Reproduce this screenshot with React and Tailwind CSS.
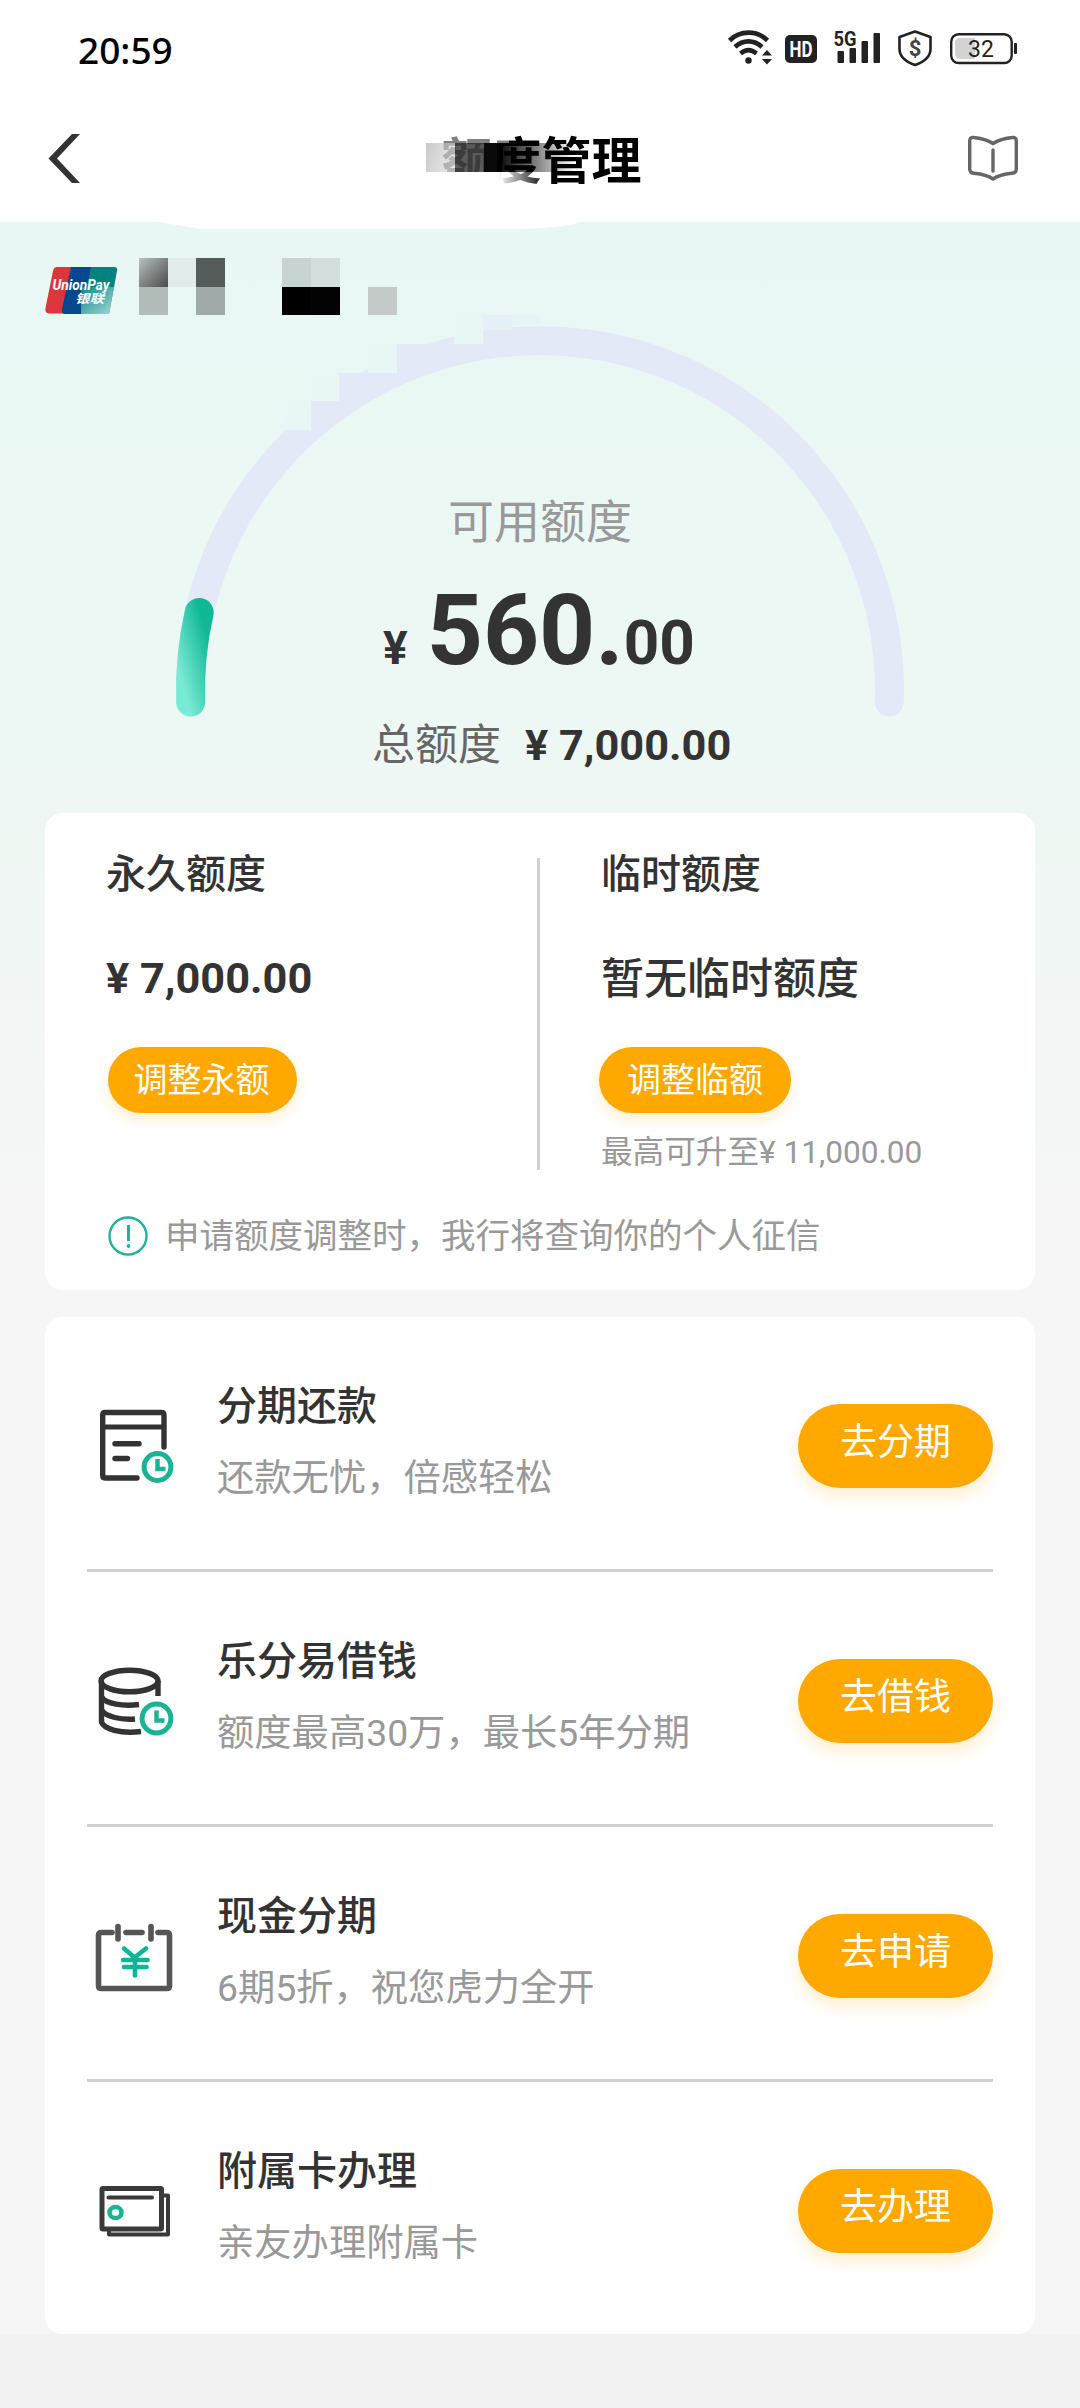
import React from 'react';

// each cell of the masked card number, null = nothing drawn
const maskCells = [
	'bg-gradient-to-br from-[#b9c3c1] to-[#4c4c4c]', 'bg-[#e0ece9]', 'bg-[#555b59]', null, null, 'bg-[#c8d4d1]', 'bg-[#d3dfdc]', null, null,
	'bg-[#b1bcb9]', null, 'bg-[#a0aaa8]', null, null, 'bg-black', 'bg-[#030303]', null, 'bg-[#c4cac8]',
];

const Clock = ({ cx, cy, rx, ry }) => (
	<g fill="none" stroke="#1ab394" strokeWidth="5">
		<ellipse cx={cx} cy={cy} rx={rx} ry={ry} />
		<path d={`M${cx} ${cy - 8}V${cy + 2}H${cx + 8}`} strokeWidth="4.5" />
	</g>
);

const BillIcon = () => (
	<svg className="overflow-visible" width="80" height="84" viewBox="0 0 80 84">
		<g fill="none" stroke="#333" strokeWidth="5.400" strokeLinecap="round" strokeLinejoin="round">
			<path d="M71 43V11Q71 8.500 68.500 8.500H12Q9.700 8.500 9.700 11V71.500Q9.700 74 12 74H44" />
			<path d="M10 23H70" strokeLinecap="butt" strokeWidth="4.800" />
			<path d="M22 39.800H46M22 54.500H34.500" />
		</g>
		<Clock cx={64.5} cy={63} rx={13.4} ry={13.4} />
	</svg>
);

const CoinsIcon = () => (
	<svg className="overflow-visible" width="80" height="84" viewBox="0 0 80 84">
		<g fill="none" stroke="#333" strokeWidth="5.400">
			<ellipse cx="36.500" cy="22" rx="28.500" ry="10.800" />
			<path d="M65 22V37M8.500 22V63C11 70 27 75 48 72.500" />
			<path d="M8.500 38C13 45 30 47.500 46 45.500M8.500 51C13 58 28 61 42 60" />
		</g>
		<Clock cx={63.5} cy={59.5} rx={14.4} ry={14.4} />
	</svg>
);

const CashIcon = () => (
	<svg className="overflow-visible" width="80" height="84" viewBox="1 -3 80 84">
		<g fill="none" stroke="#555" strokeWidth="5.600" strokeLinecap="round" strokeLinejoin="round">
			<path d="M20 15.500H9.500Q6.500 15.500 6.500 18.500V69Q6.500 71.500 9.500 71.500H74.500Q77.500 71.500 77.500 69V18.500Q77.500 15.500 74.500 15.500H66" />
			<path d="M34 15.500H50M26 9.500V22M59 9.500V22" />
		</g>
		<path d="M32 31.500L42.500 40.500L54 31.500M43 40V58.500M31 43H55.500M32 50H54.500" fill="none" stroke="#08b894" strokeWidth="4.600" strokeLinecap="round" />
	</svg>
);

const CardIcon = () => (
	<svg className="overflow-visible" width="80" height="84" viewBox="1 -3 80 84">
		<g fill="none" stroke="#3a3a3a" strokeWidth="5" strokeLinejoin="round">
			<rect x="10" y="16.500" width="59.500" height="40.500" rx="1" />
			<path d="M70 23.500H76V62.500H17V57" strokeWidth="4" />
			<path d="M16.500 25.500H60" strokeWidth="4" strokeLinecap="round" />
		</g>
		<ellipse cx="23.500" cy="40.500" rx="6" ry="5.600" fill="none" stroke="#1ab394" strokeWidth="4.500" />
	</svg>
);

const services = [
	{ icon: <BillIcon />, title: '分期还款', desc: '还款无忧，倍感轻松', action: '去分期' },
	{ icon: <CoinsIcon />, title: '乐分易借钱', desc: '额度最高30万，最长5年分期', action: '去借钱' },
	{ icon: <CashIcon />, title: '现金分期', desc: '6期5折，祝您虎力全开', action: '去申请' },
	{ icon: <CardIcon />, title: '附属卡办理', desc: '亲友办理附属卡', action: '去办理' },
];

const StatusBar = () => (
	<div className="flex h-[96px] items-center justify-between pr-[61px] pl-[78px]">
		<p className="pt-[2px] font-['Noto_Sans','Noto_Sans_CJK_SC',sans-serif] text-[37px] leading-none font-medium text-black">20:59</p>
		<svg width="292" height="42" viewBox="728 27 292 42" fill="#222">
			{/* wifi */}
			<g fill="none" stroke="#222" strokeWidth="4.600">
				<path d="M730.500 40.500C741 30 758 30 768.500 40.500" />
				<path d="M736 47C744 39.500 755 39.500 763 47" />
				<path d="M741.500 53.500C747 49 752 49 757.500 53.500" />
			</g>
			<circle cx="749.500" cy="60.500" r="3.200" />
			<path d="M768 50L773 55.500H763ZM768 64.500L773 59H763Z" />
			<rect x="786" y="35" width="32" height="28" rx="5" />
			<text x="802" y="57" fill="#fff" fontSize="22" fontWeight="700" textAnchor="middle" textLength="23" lengthAdjust="spacingAndGlyphs">HD</text>
			{/* signal */}
			<text x="834.500" y="46" fontSize="20" fontWeight="700" textLength="23" lengthAdjust="spacingAndGlyphs">5G</text>
			<rect x="838.500" y="51" width="6.500" height="12" rx="1" />
			<rect x="850.500" y="48" width="6.500" height="15" rx="1" />
			<rect x="862.500" y="41" width="6.500" height="22" rx="1" />
			<rect x="874.500" y="33" width="6.500" height="30" rx="1" />
			<path d="M916 31.500L931.500 37V49C931.500 57 926 61.500 916 65C906 61.500 900.500 57 900.500 49V37Z" fill="none" stroke="#222" strokeWidth="2.600" strokeLinejoin="round" />
			<text x="916" y="56" fill="#444" fontSize="22" fontWeight="700" textAnchor="middle">$</text>
			{/* battery */}
			<rect x="952.200" y="34.200" width="60.500" height="28.800" rx="7.500" fill="none" stroke="#222" strokeWidth="2.400" />
			<path d="M976 38H961Q956 38 956 43V54Q956 59 961 59H976Z" fill="#d3d3d3" />
			<rect x="1015" y="43" width="3" height="11" rx="1" />
			<text x="982" y="57" fontSize="23" textAnchor="middle" textLength="26">32</text>
		</svg>
	</div>
);

const TitleBar = () => (
	<div className="flex h-[126px] items-start justify-between pt-[36px] pr-[61px] pl-[46px]">
		<svg width="52" height="54" viewBox="46 132 52 54">
			<path d="M72 134H80L57 158.500L80 183H72L48.500 158.500Z" fill="#333" />
		</svg>
		<div className="relative ml-[18px] pt-[3px]">
			<h1 className="text-[50px] leading-[54px] font-bold text-black">额度管理</h1>
			{/* mosaic over the first two characters */}
			<svg className="absolute -top-[6px] -left-[23px]" width="190" height="70" viewBox="418 126 190 70">
				<defs>
					<linearGradient id="m1" x1="0" x2="1" y2="0.300">
						<stop offset="0" stopColor="#bcbcbc" />
						<stop offset="1" stopColor="#e2e2e2" />
					</linearGradient>
					<linearGradient id="m2" x1="0" x2="1" y2="0">
						<stop offset="0" stopColor="#000" />
						<stop offset="0.400" stopColor="#000" stopOpacity="0.600" />
						<stop offset="1" stopColor="#000" stopOpacity="0" />
					</linearGradient>
					<linearGradient id="m3" x1="0" x2="1" y2="0">
						<stop offset="0.550" stopColor="#fff" />
						<stop offset="1" stopColor="#fff" stopOpacity="0" />
					</linearGradient>
				</defs>
				<rect x="436" y="172" width="110" height="20" fill="url(#m3)" />
				<rect x="436" y="130" width="72" height="13" fill="#fff" opacity="0.500" />
				<rect x="425" y="143" width="29" height="29" fill="url(#m1)" opacity="0.800" />
				<rect x="454" y="143" width="29" height="29" fill="#444" opacity="0.880" />
				<rect x="483" y="143" width="14" height="29" fill="#0a0a0a" />
				<rect x="496" y="143" width="78" height="29" fill="url(#m2)" />
			</svg>
		</div>
		<svg className="mt-px" width="52" height="50" viewBox="967 134 52 50" fill="none" stroke="#666" strokeWidth="3.400" strokeLinecap="round" strokeLinejoin="round">
			<path d="M993 144.500C988 141 981 139.500 974 138.500C971 138 969.700 139.500 969.700 142V170C969.700 173 971 174 974 174.300C981 175 988 176.500 993 180C998 176.500 1005 175 1012 174.300C1015 174 1016.300 173 1016.300 170V142C1016.300 139.500 1015 138 1012 138.500C1005 139.500 998 141 993 144.500Z" />
			<path d="M993 151V172" />
		</svg>
	</div>
);

const UnionPay = () => (
	<svg width="74" height="50" viewBox="44 266 74 50">
		<defs>
			<linearGradient id="wash" x1="0" y1="0" x2="1" y2="1">
				<stop offset="0" stopColor="#0b8a8a" />
				<stop offset="1" stopColor="#c4e6e6" />
			</linearGradient>
		</defs>
		<path d="M57 267H74L64 313.500H49Q44.500 313 45.500 308L53 271Q54 267 57 267Z" fill="#dc363c" />
		<path d="M71 267H92L82 314H64Q61 313 62 309Z" fill="#05488f" />
		<path d="M91 267H114Q118 267 117 271L109 314H81Z" fill="#00827f" />
		<path d="M81 287H114L109 314H81Z" fill="url(#wash)" opacity="0.850" />
		<g fill="#fff" fontWeight="700" fontStyle="italic">
			<text x="52.500" y="289.500" fontSize="14" textLength="57" lengthAdjust="spacingAndGlyphs">UnionPay</text>
			<text x="75" y="303" fontSize="12" textLength="29" lengthAdjust="spacingAndGlyphs">银联</text>
		</g>
	</svg>
);

const Gauge = () => (
	<svg className="col-start-1 row-start-1" width="1080" height="591" viewBox="0 222 1080 591" fill="none">
		<defs>
			<linearGradient id="used" gradientUnits="userSpaceOnUse" x1="176" y1="660" x2="211" y2="650">
				<stop offset="0" stopColor="#79ead3" />
				<stop offset="1" stopColor="#10b996" />
			</linearGradient>
		</defs>
		<path d="M160 222H580Q560 229 510 229H200Z" fill="#fff" />
		<path d="M190.700 702A349.500 349.500 0 1 1 889.300 702" stroke="#e4e9f8" strokeWidth="29" strokeLinecap="round" />
		<path d="M190.700 702A349.500 349.500 0 0 1 199.200 612.500" stroke="url(#used)" strokeWidth="29" strokeLinecap="round" />
		{/* blocky part of the ring */}
		<g fill="#e9f7f4">
			<rect x="454" y="315" width="29" height="29" />
			<rect x="368" y="344" width="29" height="29" />
			<rect x="311" y="373" width="28" height="28" />
			<rect x="282" y="401" width="29" height="29" />
		</g>
		<g fill="#e4e9f8">
			<path d="M397 344H483V355Q440 361 397 373Z" />
			<path d="M339 373H397V386L370 401H339Z" />
			<path d="M311 401H339V418L320 430H311Z" />
			<path d="M284 430H311V432L284 452Z" />
			<rect x="483" y="315" width="29" height="15" fill="#e5eff6" />
			<rect x="512" y="315" width="29" height="10" fill="#e7f4f5" />
		</g>
	</svg>
);

const Hero = () => (
	<div className="grid">
		<Gauge />
		<div className="col-start-1 row-start-1 flex flex-col">
			<div className="flex items-start pt-[36px] pl-[44px]">
				<div className="pt-2">
					<UnionPay />
				</div>
				<div className="ml-[21px] grid grid-cols-[repeat(9,28.67px)] grid-rows-[29px_28px]">
					{maskCells.map((cell, idx) => (
						<span key={idx} className={cell || ''}></span>
					))}
				</div>
			</div>
			<p className="mt-[173px] text-center text-[46px] leading-[66px] text-[#999]">可用额度</p>
			<div className="mt-[26px] flex items-baseline pl-[383px] leading-[100px] font-bold text-[#333]">
				<span className="text-[46px]">¥</span>
				<span className="ml-[19px] text-[98px]">560.</span>
				<span className="text-[62px]">00</span>
			</div>
			<div className="mt-[17px] flex items-baseline pl-[372px] leading-[60px]">
				<span className="text-[43px] text-[#666]">总额度</span>
				<span className="ml-[24px] text-[43.3px] font-bold text-[#333]">¥ 7,000.00</span>
			</div>
		</div>
	</div>
);

const smallButton = 'h-[66px] rounded-full bg-[#ffa800] text-[34px] leading-[64px] text-white shadow-[0_6px_14px_rgba(255,168,0,0.2)]';

const LimitCard = () => (
	<div className="mx-[45px] h-[477px] rounded-[18px] bg-white">
		<div className="flex pt-[45px]">
			<div className="flex h-[312px] w-[495px] flex-col items-start border-r-3 border-[#d0d0d0] pl-[61px]">
				<h2 className="-mt-[13px] text-[40px] leading-[60px] font-medium text-[#333]">永久额度</h2>
				<p className="mt-[44px] text-[43.3px] leading-[60px] font-bold text-[#333]">¥ 7,000.00</p>
				<button className={`mt-[38px] ml-[2px] w-[189px] pr-[2px] ${smallButton}`}>调整永额</button>
			</div>
			<div className="flex flex-col items-start pl-[61px]">
				<h2 className="-mt-[13px] text-[40px] leading-[60px] font-medium text-[#333]">临时额度</h2>
				<p className="mt-[44px] text-[43px] leading-[60px] font-medium text-[#333]">暂无临时额度</p>
				<button className={`mt-[38px] -ml-[2px] w-[192px] ${smallButton}`}>调整临额</button>
				<p className="mt-[17px] text-[31.6px] leading-[46px] text-[#999]">最高可升至¥ 11,000.00</p>
			</div>
		</div>
		<div className="mt-[35px] flex items-center gap-[16px] pl-[62px]">
			<svg width="42" height="42" viewBox="0 0 42 42">
				<circle cx="21" cy="21" r="18.500" fill="none" stroke="#21b39a" strokeWidth="2.400" />
				<path d="M21.500 10V26" stroke="#21b39a" strokeWidth="3" />
				<circle cx="21.500" cy="31" r="1.900" fill="#21b39a" />
			</svg>
			<p className="text-[34.5px] leading-[50px] whitespace-nowrap text-[#999]">申请额度调整时，我行将查询你的个人征信</p>
		</div>
	</div>
);

const App = () => {
	return (
		<div className="min-h-[2408px] w-[1080px] bg-[#f2f2f2] font-[Roboto,'Noto_Sans_CJK_SC',sans-serif]">
			<div className="bg-white">
				<StatusBar />
				<TitleBar />
			</div>
			<div className="h-[2112px] bg-[linear-gradient(180deg,#e8f7f4_0px,#ebf8f4_300px,#eef7f3_580px,#f6f6f6_1000px)]">
				<Hero />
				<LimitCard />
				{/* service list */}
				<div className="mx-[45px] mt-[27px] rounded-[18px] bg-white px-[42px]">
					{services.map((item, idx) => (
						<div key={idx} className="flex h-[255px] items-start border-b-3 border-[#d0d0d0] last:h-[252px] last:border-b-0">
							<div className="mt-[87px] ml-[6px]">{item.icon}</div>
							<div className="ml-[44px] pt-[61px]">
								<h3 className="text-[40px] leading-[58px] font-medium text-[#333]">{item.title}</h3>
								<p className="mt-[15px] text-[37.3px] leading-[54px] whitespace-nowrap text-[#999]">{item.desc}</p>
							</div>
							<button className="mt-[87px] ml-auto h-[84px] w-[195px] rounded-full bg-[#ffa800] pb-[6px] text-[37px] leading-[78px] text-white shadow-[0_8px_16px_rgba(255,168,0,0.2)]">{item.action}</button>
						</div>
					))}
				</div>
			</div>
		</div>
	);
};

export default App;
